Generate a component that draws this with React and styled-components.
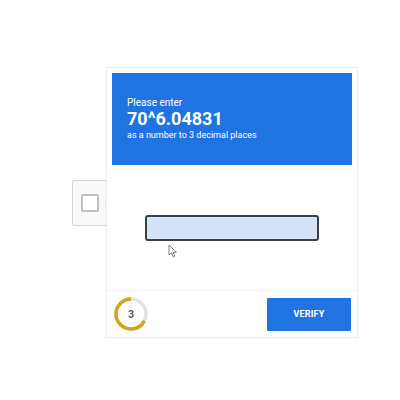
import React from 'react';
import styled, { createGlobalStyle } from 'styled-components';

const GlobalStyle = createGlobalStyle`
  html, body { margin: 0; padding: 0; background: #fff; }
  body { font-family: Roboto, "Liberation Sans", Arial, sans-serif; }
`;

const Stage = styled.div`
  position: relative;
  width: 400px;
  height: 400px;
  overflow: hidden;
  padding: 180px 0 0 72px;
  box-sizing: border-box;
`;

const Widget = styled.div`
  width: 240px;
  height: 46px;
  box-sizing: border-box;
  border: 1px solid #d6d6d6;
  border-radius: 2px;
  background: #f9f9f9;
  display: flex;
  align-items: center;
  padding-left: 8px;
  gap: 6px;
`;

const CheckBox = styled.div`
  width: 18px;
  height: 18px;
  box-sizing: border-box;
  border: 2px solid #c1c1c1;
  border-radius: 2px;
  background: #fff;
`;

const WidgetLabel = styled.span`
  font-size: 13px;
  color: #555;
`;

const Popup = styled.div`
  position: absolute;
  left: 106px;
  top: 67px;
  width: 252px;
  height: 271px;
  box-sizing: border-box;
  background: #fff;
  border: 1px solid #efefef;
  box-shadow: 0 0 2px rgba(0, 0, 0, 0.04);
  display: flex;
  flex-direction: column;
  padding: 5px 5px 0;
`;

const Header = styled.div`
  background: #1f74e1;
  height: 92px;
  box-sizing: border-box;
  padding: 23px 15px 0;
  color: #fff;
  display: flex;
  flex-direction: column;
`;

const Lead = styled.div`
  font-size: 10px;
  line-height: 13px;
`;

const Expression = styled.div`
  font-size: 18px;
  font-weight: 700;
  line-height: 20px;
`;

const Hint = styled.div`
  font-size: 9px;
  line-height: 13px;
`;

const Body = styled.div`
  height: 125px;
  display: flex;
  align-items: center;
  justify-content: center;
`;

const AnswerInput = styled.div`
  width: 174px;
  height: 26px;
  box-sizing: border-box;
  border: 2px solid #3b4049;
  border-radius: 3px;
  background: #d3e2f8;
`;

const Footer = styled.div`
  flex: 1;
  border-top: 1px solid #f1f1f1;
  margin: 0 -5px;
  padding: 0 6px 0 7px;
  display: flex;
  align-items: center;
  justify-content: space-between;
`;

const Timer = styled.div`
  position: relative;
  width: 34px;
  height: 34px;
  display: flex;
  align-items: center;
  justify-content: center;
  font-size: 10px;
  font-weight: 700;
  color: #555;
`;

const TimerRing = styled.svg`
  position: absolute;
  inset: 0;
`;

const VerifyButton = styled.button`
  width: 84px;
  height: 33px;
  border: none;
  border-radius: 1px;
  background: #1f74e1;
  color: #fff;
  font-family: Roboto, "Liberation Sans", Arial, sans-serif;
  font-size: 9px;
  font-weight: 700;
  letter-spacing: 0.2px;
  padding: 0;
`;

const Cursor = styled.svg`
  position: absolute;
  left: 168px;
  top: 244px;
`;

function Ring({ progress }) {
  const r = 15;
  const c = 2 * Math.PI * r;
  return (
    <TimerRing width="34" height="34" viewBox="0 0 34 34">
      <circle cx="17" cy="17" r={r} fill="none" stroke="#e3e3e3" strokeWidth="3.5" />
      <circle
        cx="17"
        cy="17"
        r={r}
        fill="none"
        stroke="#d6a31e"
        strokeWidth="3.5"
        strokeDasharray={`${c * progress} ${c}`}
        transform="rotate(-90 17 17) scale(1 -1) translate(0 -34)"
      />
    </TimerRing>
  );
}

export default function App() {
  return (
    <>
      <GlobalStyle />
      <Stage>
        <Widget>
          <CheckBox />
          <WidgetLabel>I'm not a robot</WidgetLabel>
        </Widget>
        <Popup>
          <Header>
            <Lead>Please enter</Lead>
            <Expression>70^6.04831</Expression>
            <Hint>as a number to 3 decimal places</Hint>
          </Header>
          <Body>
            <AnswerInput />
          </Body>
          <Footer>
            <Timer>
              <Ring progress={0.67} />
              3
            </Timer>
            <VerifyButton>VERIFY</VerifyButton>
          </Footer>
        </Popup>
        <Cursor width="10" height="14" viewBox="0 0 10 14">
          <path d="M1 1 L1 11 L3.5 8.8 L5.3 12.8 L6.8 12.1 L5.1 8.3 L8.4 8.3 Z" fill="#fff" stroke="#6b6b6b" strokeWidth="0.9" strokeLinejoin="round" />
        </Cursor>
      </Stage>
    </>
  );
}
